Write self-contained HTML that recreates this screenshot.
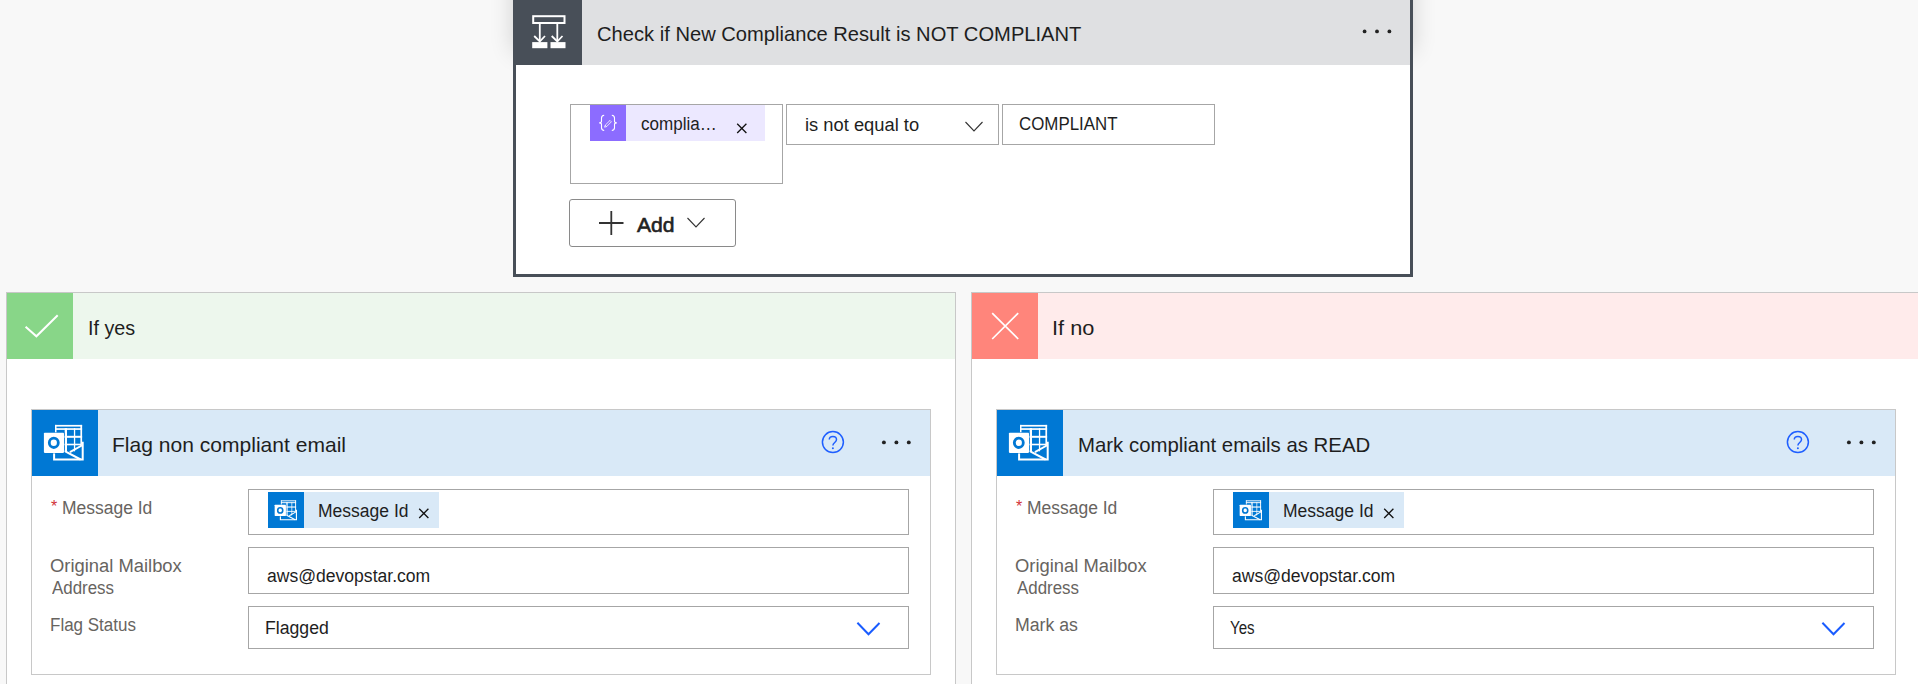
<!DOCTYPE html>
<html><head><meta charset="utf-8">
<style>
html,body{margin:0;padding:0;}
body{width:1918px;height:684px;overflow:hidden;background:#f8f8f8;position:relative;font-family:"Liberation Sans",sans-serif;}
.a{position:absolute;box-sizing:border-box;}
.t{position:absolute;white-space:pre;line-height:1;font-family:"Liberation Sans",sans-serif;}
svg{position:absolute;overflow:visible;}
</style></head><body>
<svg width="0" height="0" style="position:absolute"><defs><symbol id="ol" viewBox="0 0 66 66">
<g fill="#fff">
<rect x="23" y="14.9" width="27.1" height="1.7"/>
<rect x="23" y="18.2" width="27.1" height="1.7"/>
<rect x="23" y="14.9" width="1.5" height="26"/>
<rect x="48.4" y="14.9" width="1.7" height="22"/>
<rect x="23" y="25.8" width="27.1" height="2"/>
<rect x="23" y="33.7" width="27.1" height="1.6"/>
<rect x="32.7" y="18.2" width="2.3" height="26"/>
<rect x="41.9" y="18.2" width="1.3" height="26"/>
</g>
<polygon points="22.1,41 32.3,40.9 39,44.5 50.7,34 50.7,50 22.1,50" fill="#0078d4"/>
<path d="M22.1 42 V49.5 H50.7 V31.7" stroke="#fff" stroke-width="2" fill="none"/>
<path d="M32.3 40.9 L48.6 49.5" stroke="#fff" stroke-width="2" fill="none"/>
<path d="M50.7 35 L37.9 42.2" stroke="#fff" stroke-width="2" fill="none"/>
<rect x="11.4" y="22.3" width="21.1" height="21.1" fill="#0078d4"/>
<rect x="11.9" y="22.8" width="20.1" height="20.1" rx="0.8" fill="#fff"/>
<ellipse cx="21.8" cy="32.85" rx="4.5" ry="4.65" stroke="#0078d4" stroke-width="2.8" fill="none"/>
</symbol></defs></svg>
<div class="a" style="left:513px;top:-120px;width:900px;height:172px;box-shadow:0 0 22px rgba(0,0,0,0.16);"></div>
<div class="a" style="left:513px;top:-4px;width:900px;height:281px;border:3px solid #484f58;background:#fff;"></div>
<div class="a" style="left:516px;top:-1px;width:894px;height:66px;background:#dfe0e2;"></div>
<div class="a" style="left:516px;top:-1px;width:66px;height:66px;background:#484f58;"></div>
<svg style="left:516px;top:-1px" width="66" height="66" viewBox="0 0 66 66">
<rect x="17.2" y="17.2" width="31.3" height="6.8" stroke="#fff" stroke-width="2" fill="none"/>
<path d="M23.8 24 V42 M41.3 24 V42" stroke="#fff" stroke-width="1.8" fill="none"/>
<path d="M18.2 37 L23.8 42.5 L29 37 M35.7 37 L41.3 42.5 L46.5 37" stroke="#fff" stroke-width="1.8" fill="none"/>
<rect x="16.2" y="43.1" width="15.2" height="6.1" fill="#fff"/>
<rect x="34.5" y="43.1" width="15" height="6.1" fill="#fff"/>
</svg>
<div class="t" id="title" style="left:596.52px;top:23.00px;font-size:21px;color:#1e1e1e;transform:scaleX(0.9594);transform-origin:0 0;">Check if New Compliance Result is NOT COMPLIANT</div>
<svg style="left:1360px;top:27px" width="34" height="8"><g fill="#222"><circle cx="4.6" cy="4.4" r="1.9"/><circle cx="17" cy="4.4" r="1.9"/><circle cx="29.4" cy="4.4" r="1.9"/></g></svg>
<div class="a" style="left:570px;top:104px;width:213px;height:80px;border:1px solid #a6a6a6;background:#fff;"></div>
<div class="a" style="left:590px;top:105px;width:175px;height:36px;background:#ece8ff;"></div>
<div class="a" style="left:590px;top:105px;width:36px;height:36px;background:#8c6cff;"></div>
<svg style="left:590px;top:105px" width="36" height="36"><g stroke="#fff" stroke-width="1.1" fill="none"><path d="M14.2 10.3 C12.1 10.5 11.5 11.5 11.5 13 V16.3 C11.5 17.3 10.7 17.9 9.2 17.9 C10.7 17.9 11.5 18.5 11.5 19.5 V22.8 C11.5 24.3 12.1 25.3 14.2 25.5"/><path d="M21.8 10.3 C23.9 10.5 24.5 11.5 24.5 13 V16.3 C24.5 17.3 25.3 17.9 26.8 17.9 C25.3 17.9 24.5 18.5 24.5 19.5 V22.8 C24.5 24.3 23.9 25.3 21.8 25.5"/><path d="M15.2 20.2 L20 15.4 L21.4 16.8 L16.6 21.6 Z M15.2 20.2 L14.6 22.2 L16.6 21.6" stroke-width="0.8"/></g></svg>
<div class="t" id="compl" style="left:641.32px;top:115.00px;font-size:18px;color:#1e1e1e;transform:scaleX(0.9471);transform-origin:0 0;">complia…</div>
<svg style="left:736px;top:123px" width="12" height="11"><path d="M1.2 0.8 L10.4 10 M10.4 0.8 L1.2 10" stroke="#111" stroke-width="1.3"/></svg>
<div class="a" style="left:786px;top:104px;width:213px;height:41px;border:1px solid #a6a6a6;background:#fff;"></div>
<div class="t" id="isnot" style="left:804.52px;top:116.00px;font-size:18px;color:#1e1e1e;transform:scaleX(1.0179);transform-origin:0 0;">is not equal to</div>
<svg style="left:965px;top:121px" width="19" height="12"><path d="M0.5 1 L9 10 L17.5 1" stroke="#333" stroke-width="1.1" fill="none"/></svg>
<div class="a" style="left:1002px;top:104px;width:213px;height:41px;border:1px solid #a6a6a6;background:#fff;"></div>
<div class="t" id="compliant" style="left:1018.68px;top:115.00px;font-size:18px;color:#1e1e1e;transform:scaleX(0.9379);transform-origin:0 0;">COMPLIANT</div>
<div class="a" style="left:569px;top:199px;width:167px;height:48px;border:1px solid #8a8a8a;border-radius:3px;background:#fff;"></div>
<svg style="left:599px;top:211px" width="25" height="24"><path d="M0 12 H24.5 M12.3 0 V24" stroke="#333" stroke-width="1.8" fill="none"/></svg>
<div class="t" id="add" style="left:636.96px;top:214.00px;font-size:21px;color:#222;transform:scaleX(1.0059);transform-origin:0 0;-webkit-text-stroke:0.6px #222;">Add</div>
<svg style="left:687px;top:217px" width="19" height="12"><path d="M0.5 1 L9 10 L17.5 1" stroke="#333" stroke-width="1.1" fill="none"/></svg>
<div class="a" style="left:6px;top:292px;width:950px;height:500px;border:1px solid #c8c8c8;background:#fff;"></div>
<div class="a" style="left:7px;top:293px;width:948px;height:66px;background:#edf7ed;"></div>
<div class="a" style="left:7px;top:293px;width:66px;height:66px;background:#88d688;"></div>
<svg style="left:7px;top:293px" width="66" height="66"><path d="M18.6 33.7 L29.4 43.3 L50.7 22.2" stroke="#fff" stroke-width="2" fill="none"/></svg>
<div class="t" id="ifyes" style="left:88.00px;top:317.00px;font-size:21px;color:#1e1e1e;transform:scaleX(0.9406);transform-origin:0 0;">If yes</div>
<div class="a" style="left:971px;top:292px;width:950px;height:500px;border:1px solid #c8c8c8;background:#fff;"></div>
<div class="a" style="left:972px;top:293px;width:948px;height:66px;background:#ffebeb;"></div>
<div class="a" style="left:972px;top:293px;width:66px;height:66px;background:#ff857b;"></div>
<svg style="left:972px;top:293px" width="66" height="66"><path d="M20.2 20.2 L46.2 46 M46.2 20.2 L20.2 46" stroke="#fff" stroke-width="1.7" fill="none"/></svg>
<div class="t" id="ifno" style="left:1052.20px;top:317.00px;font-size:21px;color:#1e1e1e;transform:scaleX(1.0370);transform-origin:0 0;">If no</div>
<div class="a" style="left:31px;top:409px;width:900px;height:266px;border:1px solid #c8c8c8;background:#fff;"></div>
<div class="a" style="left:32px;top:410px;width:898px;height:66px;background:#d9e9f7;"></div>
<div class="a" style="left:32px;top:410px;width:66px;height:66px;background:#0078d4;"></div>
<svg style="left:32px;top:410px" width="66" height="66"><use href="#ol"/></svg>
<div class="t" id="atitleL" style="left:112.20px;top:434.00px;font-size:21px;color:#1e1e1e;transform:scaleX(1.0023);transform-origin:0 0;">Flag non compliant email</div>
<svg style="left:820px;top:430px" width="26" height="26"><circle cx="12.9" cy="12.1" r="10.5" stroke="#1f5fff" stroke-width="1.5" fill="none"/><path d="M9.3 9.6 C9.3 5.5 16.5 5.5 16.5 9.6 C16.5 12.5 12.9 12.6 12.9 15.6" stroke="#1f5fff" stroke-width="1.5" fill="none"/><circle cx="12.9" cy="18.2" r="1" fill="#1f5fff"/></svg>
<svg style="left:878px;top:438px" width="36" height="9"><circle cx="5.9" cy="4.4" r="1.95" fill="#222"/><circle cx="18.4" cy="4.4" r="1.95" fill="#222"/><circle cx="30.8" cy="4.4" r="1.95" fill="#222"/></svg>
<div class="t" id="starL" style="left:51.00px;top:499.00px;font-size:16px;color:#d13438;">*</div>
<div class="t" id="lmsgL" style="left:61.84px;top:499.00px;font-size:18px;color:#67645f;transform:scaleX(0.9704);transform-origin:0 0;">Message Id</div>
<div class="t" id="lorigL" style="left:50.20px;top:557.00px;font-size:18px;color:#67645f;transform:scaleX(1.0211);transform-origin:0 0;">Original Mailbox</div>
<div class="t" id="laddrL" style="left:51.80px;top:579.00px;font-size:18px;color:#67645f;transform:scaleX(0.9394);transform-origin:0 0;">Address</div>
<div class="t" id="l3L" style="left:50.20px;top:616.00px;font-size:18px;color:#67645f;transform:scaleX(0.9441);transform-origin:0 0;">Flag Status</div>
<div class="a" style="left:248px;top:489px;width:661px;height:46px;border:1px solid #a6a6a6;background:#fff;"></div>
<div class="a" style="left:268px;top:492px;width:171px;height:36px;background:#d9e9f7;"></div>
<div class="a" style="left:268px;top:492px;width:36px;height:36px;background:#0078d4;"></div>
<svg style="left:267.5px;top:491.5px" width="37" height="37"><use href="#ol"/></svg>
<div class="t" id="tokL" style="left:318.36px;top:502.00px;font-size:18px;color:#1e1e1e;transform:scaleX(0.9724);transform-origin:0 0;">Message Id</div>
<svg style="left:418px;top:508px" width="12" height="11"><path d="M1.2 0.8 L10.4 10 M10.4 0.8 L1.2 10" stroke="#111" stroke-width="1.3"/></svg>
<div class="a" style="left:248px;top:547px;width:661px;height:47px;border:1px solid #a6a6a6;background:#fff;"></div>
<div class="t" id="awsL" style="left:266.96px;top:567.00px;font-size:18px;color:#1e1e1e;transform:scaleX(0.9751);transform-origin:0 0;">aws@devopstar.com</div>
<div class="a" style="left:248px;top:606px;width:661px;height:43px;border:1px solid #a6a6a6;background:#fff;"></div>
<div class="t" id="v3L" style="left:264.68px;top:619.00px;font-size:18px;color:#1e1e1e;transform:scaleX(0.9804);transform-origin:0 0;">Flagged</div>
<svg style="left:856px;top:621px" width="25" height="15"><path d="M1.4 1.7 L12.5 13.2 L23.5 2" stroke="#1a5cff" stroke-width="2" fill="none"/></svg>
<div class="a" style="left:996px;top:409px;width:900px;height:266px;border:1px solid #c8c8c8;background:#fff;"></div>
<div class="a" style="left:997px;top:410px;width:898px;height:66px;background:#d9e9f7;"></div>
<div class="a" style="left:997px;top:410px;width:66px;height:66px;background:#0078d4;"></div>
<svg style="left:997px;top:410px" width="66" height="66"><use href="#ol"/></svg>
<div class="t" id="atitleR" style="left:1077.52px;top:434.00px;font-size:21px;color:#1e1e1e;transform:scaleX(0.9706);transform-origin:0 0;">Mark compliant emails as READ</div>
<svg style="left:1785px;top:430px" width="26" height="26"><circle cx="12.9" cy="12.1" r="10.5" stroke="#1f5fff" stroke-width="1.5" fill="none"/><path d="M9.3 9.6 C9.3 5.5 16.5 5.5 16.5 9.6 C16.5 12.5 12.9 12.6 12.9 15.6" stroke="#1f5fff" stroke-width="1.5" fill="none"/><circle cx="12.9" cy="18.2" r="1" fill="#1f5fff"/></svg>
<svg style="left:1843px;top:438px" width="36" height="9"><circle cx="5.9" cy="4.4" r="1.95" fill="#222"/><circle cx="18.4" cy="4.4" r="1.95" fill="#222"/><circle cx="30.8" cy="4.4" r="1.95" fill="#222"/></svg>
<div class="t" id="starR" style="left:1016.00px;top:499.00px;font-size:16px;color:#d13438;">*</div>
<div class="t" id="lmsgR" style="left:1026.84px;top:499.00px;font-size:18px;color:#67645f;transform:scaleX(0.9704);transform-origin:0 0;">Message Id</div>
<div class="t" id="lorigR" style="left:1015.20px;top:557.00px;font-size:18px;color:#67645f;transform:scaleX(1.0211);transform-origin:0 0;">Original Mailbox</div>
<div class="t" id="laddrR" style="left:1016.80px;top:579.00px;font-size:18px;color:#67645f;transform:scaleX(0.9394);transform-origin:0 0;">Address</div>
<div class="t" id="l3R" style="left:1015.04px;top:616.00px;font-size:18px;color:#67645f;transform:scaleX(0.9830);transform-origin:0 0;">Mark as</div>
<div class="a" style="left:1213px;top:489px;width:661px;height:46px;border:1px solid #a6a6a6;background:#fff;"></div>
<div class="a" style="left:1233px;top:492px;width:171px;height:36px;background:#d9e9f7;"></div>
<div class="a" style="left:1233px;top:492px;width:36px;height:36px;background:#0078d4;"></div>
<svg style="left:1232.5px;top:491.5px" width="37" height="37"><use href="#ol"/></svg>
<div class="t" id="tokR" style="left:1283.36px;top:502.00px;font-size:18px;color:#1e1e1e;transform:scaleX(0.9724);transform-origin:0 0;">Message Id</div>
<svg style="left:1383px;top:508px" width="12" height="11"><path d="M1.2 0.8 L10.4 10 M10.4 0.8 L1.2 10" stroke="#111" stroke-width="1.3"/></svg>
<div class="a" style="left:1213px;top:547px;width:661px;height:47px;border:1px solid #a6a6a6;background:#fff;"></div>
<div class="t" id="awsR" style="left:1231.96px;top:567.00px;font-size:18px;color:#1e1e1e;transform:scaleX(0.9751);transform-origin:0 0;">aws@devopstar.com</div>
<div class="a" style="left:1213px;top:606px;width:661px;height:43px;border:1px solid #a6a6a6;background:#fff;"></div>
<div class="t" id="v3R" style="left:1229.84px;top:619.00px;font-size:18px;color:#1e1e1e;transform:scaleX(0.8388);transform-origin:0 0;">Yes</div>
<svg style="left:1821px;top:621px" width="25" height="15"><path d="M1.4 1.7 L12.5 13.2 L23.5 2" stroke="#1a5cff" stroke-width="2" fill="none"/></svg>
</body></html>
